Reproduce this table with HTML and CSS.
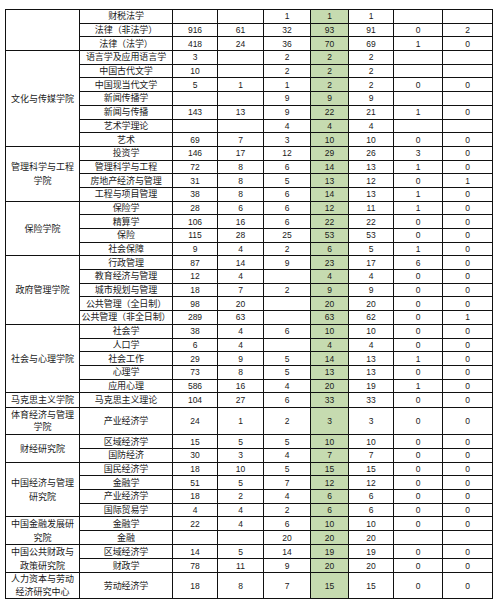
FILE: index.html
```html
<!DOCTYPE html>
<html lang="zh-CN">
<head>
<meta charset="utf-8">
<title>招生统计</title>
<link rel="stylesheet" href="styles.css">
</head>
<body>
<table class="sheet">
<colgroup>
<col class="w-college"><col class="w-major"><col class="w-c"><col class="w-d"><col class="w-e"><col class="w-f"><col class="w-g"><col class="w-h"><col class="w-i">
</colgroup>
<tbody>
<tr><td class="college" rowspan="3"></td><td class="major">财税法学</td><td class="n"></td><td class="n"></td><td class="n">1</td><td class="n g">1</td><td class="n">1</td><td class="n"></td><td class="n"></td></tr>
<tr><td class="major">法律（非法学）</td><td class="n">916</td><td class="n">61</td><td class="n">32</td><td class="n g">93</td><td class="n">91</td><td class="n">0</td><td class="n">2</td></tr>
<tr><td class="major">法律（法学）</td><td class="n">418</td><td class="n">24</td><td class="n">36</td><td class="n g">70</td><td class="n">69</td><td class="n">1</td><td class="n">0</td></tr>

<tr><td class="college" rowspan="7">文化与传媒学院</td><td class="major">语言学及应用语言学</td><td class="n">3</td><td class="n"></td><td class="n">2</td><td class="n g">2</td><td class="n">2</td><td class="n"></td><td class="n"></td></tr>
<tr><td class="major">中国古代文学</td><td class="n">10</td><td class="n"></td><td class="n">2</td><td class="n g">2</td><td class="n">2</td><td class="n"></td><td class="n"></td></tr>
<tr><td class="major">中国现当代文学</td><td class="n">5</td><td class="n">1</td><td class="n">1</td><td class="n g">2</td><td class="n">2</td><td class="n">0</td><td class="n">0</td></tr>
<tr><td class="major">新闻传播学</td><td class="n"></td><td class="n"></td><td class="n">9</td><td class="n g">9</td><td class="n">9</td><td class="n"></td><td class="n"></td></tr>
<tr><td class="major">新闻与传播</td><td class="n">143</td><td class="n">13</td><td class="n">9</td><td class="n g">22</td><td class="n">21</td><td class="n">1</td><td class="n">0</td></tr>
<tr><td class="major">艺术学理论</td><td class="n"></td><td class="n"></td><td class="n">4</td><td class="n g">4</td><td class="n">4</td><td class="n"></td><td class="n"></td></tr>
<tr><td class="major">艺术</td><td class="n">69</td><td class="n">7</td><td class="n">3</td><td class="n g">10</td><td class="n">10</td><td class="n">0</td><td class="n">0</td></tr>

<tr><td class="college" rowspan="4">管理科学与工程学院</td><td class="major">投资学</td><td class="n">146</td><td class="n">17</td><td class="n">12</td><td class="n g">29</td><td class="n">26</td><td class="n">3</td><td class="n">0</td></tr>
<tr><td class="major">管理科学与工程</td><td class="n">72</td><td class="n">8</td><td class="n">6</td><td class="n g">14</td><td class="n">13</td><td class="n">1</td><td class="n">0</td></tr>
<tr><td class="major">房地产经济与管理</td><td class="n">31</td><td class="n">8</td><td class="n">5</td><td class="n g">13</td><td class="n">12</td><td class="n">0</td><td class="n">1</td></tr>
<tr><td class="major">工程与项目管理</td><td class="n">38</td><td class="n">8</td><td class="n">6</td><td class="n g">14</td><td class="n">13</td><td class="n">1</td><td class="n">0</td></tr>

<tr><td class="college" rowspan="4">保险学院</td><td class="major">保险学</td><td class="n">28</td><td class="n">6</td><td class="n">6</td><td class="n g">12</td><td class="n">11</td><td class="n">1</td><td class="n">0</td></tr>
<tr><td class="major">精算学</td><td class="n">106</td><td class="n">16</td><td class="n">6</td><td class="n g">22</td><td class="n">22</td><td class="n">0</td><td class="n">0</td></tr>
<tr><td class="major">保险</td><td class="n">115</td><td class="n">28</td><td class="n">25</td><td class="n g">53</td><td class="n">53</td><td class="n">0</td><td class="n">0</td></tr>
<tr><td class="major">社会保障</td><td class="n">9</td><td class="n">4</td><td class="n">2</td><td class="n g">6</td><td class="n">5</td><td class="n">1</td><td class="n">0</td></tr>

<tr><td class="college" rowspan="5">政府管理学院</td><td class="major">行政管理</td><td class="n">87</td><td class="n">14</td><td class="n">9</td><td class="n g">23</td><td class="n">17</td><td class="n">6</td><td class="n">0</td></tr>
<tr><td class="major">教育经济与管理</td><td class="n">12</td><td class="n">4</td><td class="n"></td><td class="n g">4</td><td class="n">4</td><td class="n">0</td><td class="n">0</td></tr>
<tr><td class="major">城市规划与管理</td><td class="n">18</td><td class="n">7</td><td class="n">2</td><td class="n g">9</td><td class="n">9</td><td class="n">0</td><td class="n">0</td></tr>
<tr><td class="major">公共管理（全日制）</td><td class="n">98</td><td class="n">20</td><td class="n"></td><td class="n g">20</td><td class="n">20</td><td class="n">0</td><td class="n">0</td></tr>
<tr><td class="major">公共管理（非全日制）</td><td class="n">289</td><td class="n">63</td><td class="n"></td><td class="n g">63</td><td class="n">62</td><td class="n">0</td><td class="n">1</td></tr>

<tr><td class="college" rowspan="5">社会与心理学院</td><td class="major">社会学</td><td class="n">38</td><td class="n">4</td><td class="n">6</td><td class="n g">10</td><td class="n">10</td><td class="n">0</td><td class="n">0</td></tr>
<tr><td class="major">人口学</td><td class="n">6</td><td class="n">4</td><td class="n"></td><td class="n g">4</td><td class="n">4</td><td class="n">0</td><td class="n">0</td></tr>
<tr><td class="major">社会工作</td><td class="n">29</td><td class="n">9</td><td class="n">5</td><td class="n g">14</td><td class="n">13</td><td class="n">1</td><td class="n">0</td></tr>
<tr><td class="major">心理学</td><td class="n">73</td><td class="n">8</td><td class="n">5</td><td class="n g">13</td><td class="n">13</td><td class="n">0</td><td class="n">0</td></tr>
<tr><td class="major">应用心理</td><td class="n">586</td><td class="n">16</td><td class="n">4</td><td class="n g">20</td><td class="n">19</td><td class="n">1</td><td class="n">0</td></tr>

<tr><td class="college">马克思主义学院</td><td class="major">马克思主义理论</td><td class="n">104</td><td class="n">27</td><td class="n">6</td><td class="n g">33</td><td class="n">33</td><td class="n">0</td><td class="n">0</td></tr>

<tr class="tall"><td class="college">体育经济与管理学院</td><td class="major">产业经济学</td><td class="n">24</td><td class="n">1</td><td class="n">2</td><td class="n g">3</td><td class="n">3</td><td class="n">0</td><td class="n">0</td></tr>

<tr><td class="college" rowspan="2">财经研究院</td><td class="major">区域经济学</td><td class="n">15</td><td class="n">5</td><td class="n">5</td><td class="n g">10</td><td class="n">10</td><td class="n">0</td><td class="n">0</td></tr>
<tr><td class="major">国防经济</td><td class="n">30</td><td class="n">3</td><td class="n">4</td><td class="n g">7</td><td class="n">7</td><td class="n">0</td><td class="n">0</td></tr>

<tr><td class="college" rowspan="4">中国经济与管理研究院</td><td class="major">国民经济学</td><td class="n">18</td><td class="n">10</td><td class="n">5</td><td class="n g">15</td><td class="n">15</td><td class="n">0</td><td class="n">0</td></tr>
<tr><td class="major">金融学</td><td class="n">51</td><td class="n">5</td><td class="n">7</td><td class="n g">12</td><td class="n">12</td><td class="n">0</td><td class="n">0</td></tr>
<tr><td class="major">产业经济学</td><td class="n">18</td><td class="n">2</td><td class="n">4</td><td class="n g">6</td><td class="n">6</td><td class="n">0</td><td class="n">0</td></tr>
<tr><td class="major">国际贸易学</td><td class="n">4</td><td class="n">4</td><td class="n">2</td><td class="n g">6</td><td class="n">6</td><td class="n">0</td><td class="n">0</td></tr>

<tr><td class="college" rowspan="2">中国金融发展研究院</td><td class="major">金融学</td><td class="n">22</td><td class="n">4</td><td class="n">6</td><td class="n g">10</td><td class="n">10</td><td class="n">0</td><td class="n">0</td></tr>
<tr><td class="major">金融</td><td class="n"></td><td class="n"></td><td class="n">20</td><td class="n g">20</td><td class="n">20</td><td class="n"></td><td class="n"></td></tr>

<tr><td class="college" rowspan="2">中国公共财政与政策研究院</td><td class="major">区域经济学</td><td class="n">14</td><td class="n">5</td><td class="n">14</td><td class="n g">19</td><td class="n">19</td><td class="n">0</td><td class="n">0</td></tr>
<tr><td class="major">财政学</td><td class="n">78</td><td class="n">11</td><td class="n">9</td><td class="n g">20</td><td class="n">20</td><td class="n">0</td><td class="n">0</td></tr>

<tr class="last"><td class="college">人力资本与劳动经济研究中心</td><td class="major">劳动经济学</td><td class="n">18</td><td class="n">8</td><td class="n">7</td><td class="n g">15</td><td class="n">15</td><td class="n">0</td><td class="n">0</td></tr>
</tbody>
</table>
</body>
</html>
```

FILE: styles.css
```css
html, body {
  margin: 0;
  padding: 0;
  background: #ffffff;
}

.sheet {
  margin: 9px 0 0 5px;
  border-collapse: collapse;
  table-layout: fixed;
  width: 488px;
  font-family: "Noto Sans CJK SC", "Noto Sans", sans-serif;
  font-size: 9px;
  color: #1a1a1a;
}

.w-college { width: 74px; }
.w-major { width: 93px; }
.w-c { width: 45px; }
.w-d { width: 46px; }
.w-e { width: 47px; }
.w-f { width: 38px; }
.w-g { width: 45px; }
.w-h { width: 49px; }
.w-i { width: 50px; }

.sheet tr {
  height: 13.7px;
}

.sheet tr.tall {
  height: 27.5px;
}

.sheet tr.last {
  height: 26px;
}

.sheet td {
  border: 1px solid #111111;
  padding: 0;
  text-align: center;
  vertical-align: middle;
  line-height: 10px;
  white-space: nowrap;
  overflow: hidden;
}

.sheet td.college {
  white-space: normal;
  padding: 0 3px;
  line-height: 13.5px;
}

.sheet tr.last td.college,
.sheet tr.tall td.college {
  line-height: 12.5px;
}

.sheet td.major {
  letter-spacing: -0.1px;
}

.sheet td.n {
  font-family: "Liberation Sans", Arial, sans-serif;
  font-size: 8.5px;
}

.sheet td.g {
  background: #c6dbb0;
}
```
